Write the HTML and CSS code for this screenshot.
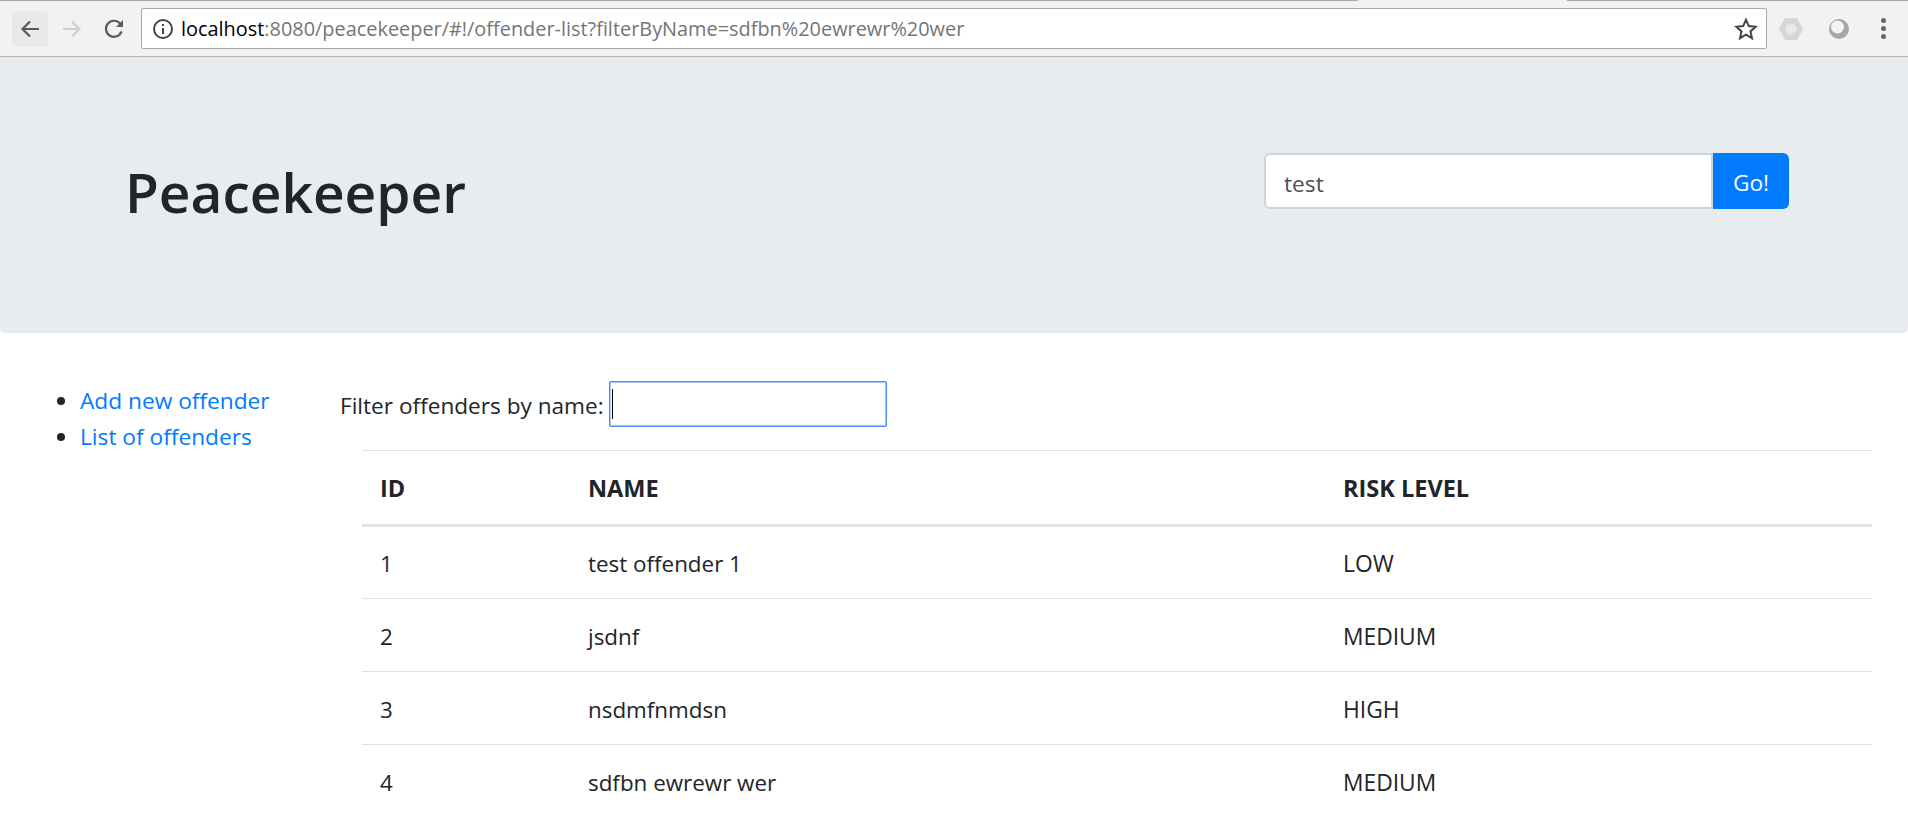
FILE: index.html
```html
<!DOCTYPE html>
<html lang="en">
<head>
  <meta charset="UTF-8" />
  <title>Peacekeeper</title>
  <link rel="stylesheet" href="styles.css">
</head>

<body>
  <div class="tabline">
    <span class="tabline-left"></span>
    <span class="tabline-right"></span>
  </div>
  <div class="toolbar">
    <span class="nav-btn nav-btn-active">
      <svg width="24" height="24" viewBox="0 0 24 24"><path d="M21 12H5M12 4.5 4.5 12l7.5 7.5" fill="none" stroke="#5a5a5a" stroke-width="2.2"/></svg>
    </span>
    <span class="nav-btn">
      <svg width="24" height="24" viewBox="0 0 24 24"><path d="M3 12h16M12 4.5l7.5 7.5-7.5 7.5" fill="none" stroke="#cfcfcf" stroke-width="2.2"/></svg>
    </span>
    <span class="nav-btn">
      <svg width="24" height="24" viewBox="0 0 24 24"><path d="M19.5 14.5A8 8 0 1 1 18 6.5" fill="none" stroke="#5a5a5a" stroke-width="2.2"/><path d="M21 3v7h-7z" fill="#5a5a5a"/></svg>
    </span>
    <div class="omnibox">
      <svg class="info-icon" width="22" height="22" viewBox="0 0 22 22"><circle cx="11" cy="11" r="9" fill="none" stroke="#444" stroke-width="2"/><path d="M10 10h2v6h-2zM10 6h2v2h-2z" fill="#444"/></svg>
      <span class="url"><span class="url-host">localhost</span>:8080/peacekeeper/#!/offender-list?filterByName=sdfbn%20ewrewr%20wer</span>
      <svg class="star-icon" width="24" height="24" viewBox="0 0 24 24"><path d="M12 2.8l2.8 6.3 6.9.7-5.2 4.6 1.5 6.8-6-3.5-6 3.5 1.5-6.8-5.2-4.6 6.9-.7z" fill="none" stroke="#444" stroke-width="2"/></svg>
    </div>
    <div class="extensions">
      <svg width="24" height="24" viewBox="0 0 24 24"><path d="M6 1h12l6 11-6 11H6L0 12z" fill="#d6d6d6"/><circle cx="12" cy="12" r="5.5" fill="#e8e8e8"/></svg>
      <svg width="24" height="24" viewBox="0 0 24 24"><circle cx="12" cy="12" r="10" fill="#a6a6a6"/><circle cx="10.5" cy="10" r="6.5" fill="#f4f4f4"/></svg>
      <span class="dots"><i></i><i></i><i></i></span>
    </div>
  </div>

  <header class="jumbotron">
    <h1>Peacekeeper</h1>
    <form class="search">
      <input class="search-input" type="text" value="test">
      <button class="search-btn" type="button">Go!</button>
    </form>
  </header>

  <div class="content">
    <aside class="sidebar">
      <ul>
        <li><a href="#">Add new offender</a></li>
        <li><a href="#">List of offenders</a></li>
      </ul>
    </aside>

    <main class="offenders">
      <div class="filter">
        <label for="filtro">Filter offenders by name:</label>
        <span class="filter-box">
          <input id="filtro" class="filter-input" type="text">
          <span class="caret"></span>
        </span>
      </div>

      <table class="offender-table">
        <thead>
          <tr>
            <th class="col-id">ID</th>
            <th class="col-name">NAME</th>
            <th>RISK LEVEL</th>
          </tr>
        </thead>
        <tbody>
          <tr><td>1</td><td>test offender 1</td><td class="risk">LOW</td></tr>
          <tr><td>2</td><td>jsdnf</td><td class="risk">MEDIUM</td></tr>
          <tr><td>3</td><td>nsdmfnmdsn</td><td class="risk">HIGH</td></tr>
          <tr><td>4</td><td>sdfbn ewrewr wer</td><td class="risk">MEDIUM</td></tr>
        </tbody>
      </table>
    </main>
  </div>
</body>
</html>
```

FILE: styles.css
```css
html, body {
  height: 100%;
}
body {
  margin: 0;
  overflow: hidden;
  font-family: 'Open Sans', sans-serif;
  font-size: 22.7px;
  line-height: 36px;
  color: #212529;
  background: #fff;
}
.tabline {
  height: 1px;
  background: #f2f2f2;
  display: flex;
  justify-content: space-between;
}
.tabline-left {
  width: 1358px;
  background: #a9a9a9;
}
.tabline-right {
  width: 341px;
  background: #a9a9a9;
}
.toolbar {
  height: 55px;
  box-sizing: border-box;
  background: #f2f2f2;
  display: flex;
  align-items: center;
  padding: 0 0 0 12px;
}
.nav-btn {
  width: 36px;
  height: 36px;
  margin-right: 6px;
  border-radius: 4px;
  display: flex;
  align-items: center;
  justify-content: center;
}
.nav-btn-active {
  background: #e9e9e9;
}
.omnibox {
  width: 1626px;
  height: 41px;
  margin-left: 3px;
  box-sizing: border-box;
  border: 1px solid #a9a9a9;
  border-radius: 2px;
  background: #fff;
  display: flex;
  align-items: center;
  padding: 0 8px 0 10px;
}
.url {
  flex: 1;
  margin-left: 7px;
  font-size: 19.9px;
  color: #757575;
  white-space: nowrap;
}
.url-host {
  color: #000;
}
.extensions {
  display: flex;
  align-items: center;
  gap: 24px;
  margin-left: 12px;
}
.dots {
  display: flex;
  flex-direction: column;
  gap: 3px;
  margin-left: 6px;
}
.dots i {
  width: 5px;
  height: 5px;
  border-radius: 50%;
  background: #666;
}
.jumbotron {
  height: 277px;
  box-sizing: border-box;
  border-top: 1px solid #b5b5b5;
  background: #e9ecef;
  border-radius: 0 0 5px 5px;
  display: flex;
  align-items: flex-start;
  justify-content: space-between;
  padding: 96px 119px 0 125px;
}
.jumbotron h1 {
  margin: 3px 0 0;
  font-size: 55px;
  font-weight: 600;
  line-height: 72px;
}
.search {
  display: flex;
}
.search-input {
  width: 449px;
  height: 56px;
  box-sizing: border-box;
  padding: 4px 18px 0;
  border: 2px solid #ced4da;
  border-radius: 6px 0 0 6px;
  font-family: inherit;
  font-size: 22.7px;
  color: #495057;
  background: #fff;
}
.search-btn {
  width: 76px;
  height: 56px;
  padding: 2px 0 0;
  border: 0;
  border-radius: 0 6px 6px 0;
  font-family: inherit;
  font-size: 22.7px;
  color: #fff;
  background: #007bff;
}
.content {
  display: flex;
}
.sidebar {
  width: 340px;
  flex: none;
}
.sidebar ul {
  margin: 0;
  padding: 50px 0 0 80px;
}
.sidebar a {
  color: #007bff;
  text-decoration: none;
}
.offenders {
  flex: 1;
  padding: 48px 36px 0 0;
}
.filter {
  display: flex;
  align-items: center;
  gap: 5px;
  font-size: 22.6px;
}
.filter label {
  padding-top: 3px;
}
.filter-box {
  position: relative;
  display: flex;
}
.filter-input {
  width: 278px;
  height: 46px;
  box-sizing: border-box;
  border: 1px solid #4d8cf5;
  border-radius: 2px;
  box-shadow: inset 0 0 0 1px #a9c6f8;
  outline: none;
}
.caret {
  position: absolute;
  left: 3px;
  top: 8px;
  width: 1px;
  height: 30px;
  background: #000;
}
.offender-table {
  width: 1510px;
  margin: 23px 0 0 22px;
  border-collapse: collapse;
  table-layout: fixed;
}
.col-id {
  width: 208px;
}
.col-name {
  width: 755px;
}
th, td {
  padding: 3px 0 0 18px;
  height: 73px;
  box-sizing: border-box;
  font-size: 22.4px;
  text-align: left;
  border-top: 1px solid #dee2e6;
}
th {
  height: 75px;
  padding-top: 1px;
  font-size: 23.5px;
  font-weight: 700;
  border-bottom: 3px solid #dee2e6;
}
td.risk {
  font-size: 22.8px;
}
```
